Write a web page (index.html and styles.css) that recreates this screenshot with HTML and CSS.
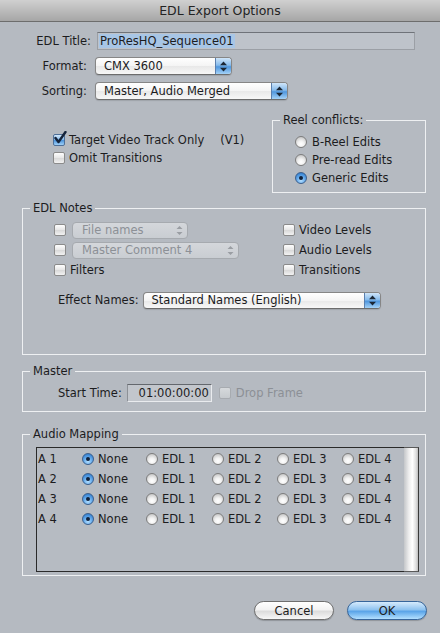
FILE: index.html
```html
<!DOCTYPE html>
<html>
<head>
<meta charset="utf-8">
<title>EDL Export Options</title>
<link rel="stylesheet" href="styles.css">
</head>
<body>
<div class="window">
  <div class="titlebar">EDL Export Options</div>

  <div class="top-form">
    <div class="row">
      <span class="lbl">EDL Title:</span>
      <div class="textfield"><span class="sel">ProResHQ_Sequence01</span></div>
    </div>
    <div class="row">
      <span class="lbl pop">Format:</span>
      <div class="popup w-format">
        <span class="ptext">CMX 3600</span>
        <span class="stepper"><svg width="7" height="11" viewBox="0 0 7 11"><path d="M0 4.2 L3.5 0.5 L7 4.2Z M0 6.8 L3.5 10.5 L7 6.8Z" fill="#1b2735"/></svg></span>
      </div>
    </div>
    <div class="row">
      <span class="lbl pop">Sorting:</span>
      <div class="popup w-sorting">
        <span class="ptext">Master, Audio Merged</span>
        <span class="stepper"><svg width="7" height="11" viewBox="0 0 7 11"><path d="M0 4.2 L3.5 0.5 L7 4.2Z M0 6.8 L3.5 10.5 L7 6.8Z" fill="#1b2735"/></svg></span>
      </div>
    </div>
  </div>

  <div class="mid">
    <div class="track-opts">
      <div class="opt"><span class="cb checked"><svg width="14" height="14" viewBox="0 0 14 14"><path d="M2.5 7 L5.5 11 L12.5 1" fill="none" stroke="#15233a" stroke-width="2.4" stroke-linecap="round" stroke-linejoin="round"/></svg></span><span>Target Video Track Only</span><span class="v1">(V1)</span></div>
      <div class="opt"><span class="cb"></span><span>Omit Transitions</span></div>
    </div>
    <fieldset class="group reel">
      <legend>Reel conflicts:</legend>
      <div class="reel-list">
        <div class="ropt"><span class="rb"></span><span>B-Reel Edits</span></div>
        <div class="ropt"><span class="rb"></span><span>Pre-read Edits</span></div>
        <div class="ropt"><span class="rb on"></span><span>Generic Edits</span></div>
      </div>
    </fieldset>
  </div>

  <fieldset class="group notes">
    <legend>EDL Notes</legend>
    <div class="notes-body">
      <div class="notes-grid">
        <div class="nopt"><span class="cb"></span>
          <div class="popup dis w-file"><span class="ptext">File names</span><span class="stepper"><svg width="7" height="11" viewBox="0 0 7 11"><path d="M0.5 4 L3.5 1 L6.5 4Z M0.5 7 L3.5 10 L6.5 7Z" fill="#9a9ea3"/></svg></span></div>
        </div>
        <div class="nopt"><span class="cb"></span><span>Video Levels</span></div>
        <div class="nopt"><span class="cb"></span>
          <div class="popup dis w-comment"><span class="ptext">Master Comment 4</span><span class="stepper"><svg width="7" height="11" viewBox="0 0 7 11"><path d="M0.5 4 L3.5 1 L6.5 4Z M0.5 7 L3.5 10 L6.5 7Z" fill="#9a9ea3"/></svg></span></div>
        </div>
        <div class="nopt"><span class="cb"></span><span>Audio Levels</span></div>
        <div class="nopt"><span class="cb"></span><span>Filters</span></div>
        <div class="nopt"><span class="cb"></span><span>Transitions</span></div>
      </div>
      <div class="effect-row">
        <span>Effect Names:</span>
        <div class="popup w-effect">
          <span class="ptext">Standard Names (English)</span>
          <span class="stepper"><svg width="7" height="11" viewBox="0 0 7 11"><path d="M0 4.2 L3.5 0.5 L7 4.2Z M0 6.8 L3.5 10.5 L7 6.8Z" fill="#1b2735"/></svg></span>
        </div>
      </div>
    </div>
  </fieldset>

  <fieldset class="group master">
    <legend>Master</legend>
    <div class="master-body">
      <span>Start Time:</span>
      <div class="tcfield">01:00:00:00</div>
      <span class="cb dim"></span>
      <span class="dimtext">Drop Frame</span>
    </div>
  </fieldset>

  <fieldset class="group audio">
    <legend>Audio Mapping</legend>
    <div class="audio-box">
      <div class="audio-table">
        <div class="arow">
          <span class="trk">A 1</span>
          <span class="aopt"><span class="rb on"></span>None</span>
          <span class="aopt"><span class="rb"></span>EDL 1</span>
          <span class="aopt"><span class="rb"></span>EDL 2</span>
          <span class="aopt"><span class="rb"></span>EDL 3</span>
          <span class="aopt"><span class="rb"></span>EDL 4</span>
        </div>
        <div class="arow">
          <span class="trk">A 2</span>
          <span class="aopt"><span class="rb on"></span>None</span>
          <span class="aopt"><span class="rb"></span>EDL 1</span>
          <span class="aopt"><span class="rb"></span>EDL 2</span>
          <span class="aopt"><span class="rb"></span>EDL 3</span>
          <span class="aopt"><span class="rb"></span>EDL 4</span>
        </div>
        <div class="arow">
          <span class="trk">A 3</span>
          <span class="aopt"><span class="rb on"></span>None</span>
          <span class="aopt"><span class="rb"></span>EDL 1</span>
          <span class="aopt"><span class="rb"></span>EDL 2</span>
          <span class="aopt"><span class="rb"></span>EDL 3</span>
          <span class="aopt"><span class="rb"></span>EDL 4</span>
        </div>
        <div class="arow">
          <span class="trk">A 4</span>
          <span class="aopt"><span class="rb on"></span>None</span>
          <span class="aopt"><span class="rb"></span>EDL 1</span>
          <span class="aopt"><span class="rb"></span>EDL 2</span>
          <span class="aopt"><span class="rb"></span>EDL 3</span>
          <span class="aopt"><span class="rb"></span>EDL 4</span>
        </div>
      </div>
      <div class="scroll-gutter"></div>
    </div>
  </fieldset>

  <div class="buttons">
    <button class="btn">Cancel</button>
    <button class="btn default">OK</button>
  </div>
</div>
</body>
</html>
```

FILE: styles.css
```css
* { box-sizing: border-box; }
html, body { margin: 0; padding: 0; }
body {
  font-family: "DejaVu Sans", "Noto Sans", sans-serif;
  font-size: 11.5px;
  color: #1c1c1e;
  background: #b5bac1;
}
.window {
  width: 440px;
  height: 633px;
  overflow: hidden;
  background: #b5bac1;
}

/* title bar */
.titlebar {
  height: 22px;
  line-height: 21px;
  text-align: center;
  font-size: 12.5px;
  color: #232323;
  background: linear-gradient(#d0d0d0, #a6a6a6);
  border-bottom: 1px solid #6d6d6d;
}

/* top form */
.top-form {
  padding-top: 10px;
  display: flex;
  flex-direction: column;
  gap: 7px;
}
.row {
  display: flex;
  align-items: center;
  height: 18px;
}
.lbl {
  width: 91px;
  flex: none;
  text-align: right;
}
.lbl.pop { padding-right: 4px; }
.textfield {
  margin-left: 6px;
  width: 318px;
  height: 18px;
  border: 1px solid #9b9fa5;
  border-top-color: #6f7379;
  background: #bec3ca;
  line-height: 16px;
  padding-left: 1px;
  white-space: nowrap;
}
.sel { background: #a8c6e6; padding: 0 1px; }

/* popup buttons */
.popup {
  margin-left: 4px;
  height: 18px;
  border: 1px solid #868686;
  border-bottom-color: #6c6c6c;
  border-radius: 4px;
  background: linear-gradient(#ffffff, #f4f4f4 50%, #e8e8e8 51%, #f7f7f7);
  display: flex;
  align-items: center;
  box-shadow: 0 1px 1px rgba(0, 0, 0, 0.12);
  overflow: hidden;
  flex: none;
}
.ptext {
  flex: 1;
  padding-left: 8px;
  line-height: 16px;
  white-space: nowrap;
}
.stepper {
  width: 16px;
  height: 100%;
  display: flex;
  align-items: center;
  justify-content: center;
  border-left: 1px solid #5a7fae;
  background: linear-gradient(#cfe5f9, #86bbec 45%, #4f96dd 55%, #a4d2f7);
}
.w-format { width: 137px; }
.w-sorting { width: 193px; }
.w-effect { width: 238px; margin-left: 4px; }
.w-file { width: 116px; }
.w-comment { width: 167px; }
.popup.dis {
  height: 17px;
  border-color: #a6aaaf;
  background: linear-gradient(#d4d7db, #c9cdd2);
  box-shadow: none;
  margin-left: 6px;
}
.popup.dis .ptext { color: #8c9096; padding-left: 9px; }
.popup.dis .stepper {
  border-left: none;
  background: none;
}

/* checkboxes & radios */
.cb {
  width: 12px;
  height: 12px;
  flex: none;
  border: 1px solid #8b8b8b;
  border-radius: 2px;
  background: linear-gradient(#fdfdfd, #e6e6e6 50%, #d8d8d8 51%, #f2f2f2);
  position: relative;
}
.cb.checked {
  background: linear-gradient(#d5e9fb, #88bdee 45%, #4e95dc 55%, #9fd0f7);
  border-color: #4e6f98;
}
.cb.checked svg {
  position: absolute;
  left: -1px;
  top: -4px;
}
.cb.dim {
  border-color: #a7abb0;
  background: linear-gradient(#d6d9dc, #c6cace);
}
.rb {
  width: 12px;
  height: 12px;
  flex: none;
  border: 1px solid #7d7d7d;
  border-radius: 50%;
  background: radial-gradient(circle at 50% 70%, #ffffff 0, #f2f2f2 35%, #c9c9c9 80%);
  position: relative;
}
.rb.on {
  border-color: #3c5f8c;
  background: radial-gradient(circle at 50% 75%, #b6e0ff 0, #6db0ee 40%, #2f7dcf 85%);
}
.rb.on::after {
  content: "";
  position: absolute;
  left: 3px;
  top: 3px;
  width: 4px;
  height: 4px;
  border-radius: 50%;
  background: #10213a;
}

/* middle section */
.mid {
  margin-top: 13px;
  display: flex;
  align-items: flex-start;
}
.track-opts {
  padding-left: 53px;
  padding-top: 18px;
}
.opt {
  height: 18px;
  display: flex;
  align-items: center;
  gap: 4px;
  white-space: nowrap;
}
.v1 { margin-left: 12px; }

/* group boxes */
.group {
  margin: 0 14px 0 22px;
  padding: 0;
  min-width: 0;
  border: 1px solid #eef0f2;
}
.group legend {
  margin-left: 7px;
  padding: 0 3px;
  line-height: 15px;
  height: 15px;
}
.reel {
  width: 154px;
  margin: 0 14px 0 auto;
}
.reel-list {
  padding: 5px 0 5px 22px;
}
.ropt {
  height: 18px;
  display: flex;
  align-items: center;
  gap: 5px;
  white-space: nowrap;
}

/* EDL notes */
.notes { margin-top: 8px; }
.notes-body {
  height: 138px;
  padding: 4px 0 0 31px;
}
.notes-grid {
  display: grid;
  grid-template-columns: 229px auto;
  grid-auto-rows: 20px;
}
.nopt {
  display: flex;
  align-items: center;
  gap: 4px;
  white-space: nowrap;
}
.nopt .popup.dis { margin-left: 2px; }
.effect-row {
  margin-top: 10px;
  margin-left: 4px;
  height: 20px;
  display: flex;
  align-items: center;
}
.effect-row .popup { height: 17px; }

/* master */
.master { margin-top: 9px; }
.master-body {
  padding: 5px 0 9px 35px;
  display: flex;
  align-items: center;
  height: 32px;
}
.tcfield {
  margin-left: 5px;
  width: 85px;
  height: 18px;
  line-height: 16px;
  text-align: right;
  padding-right: 2px;
  border: 1px solid #8d9197;
  border-top-color: #64686e;
  border-right-color: #e9ebee;
  border-bottom-color: #e9ebee;
  background: #c2c6cc;
  margin-right: 7px;
}
.dimtext { color: #8c9096; margin-left: 5px; }

/* audio mapping */
.audio { margin-top: 15px; }
.audio-box {
  margin: 5px 6px 3px 13px;
  height: 125px;
  display: flex;
}
.audio-table {
  flex: 1;
  border: 1px solid #2a2a2a;
  border-right: none;
  padding-top: 1px;
  background: #b6bbc2;
}
.arow {
  height: 20px;
  display: grid;
  grid-template-columns: 45px 64px 66px 65px 65px auto;
  align-items: center;
  white-space: nowrap;
}
.trk { padding-left: 1px; }
.aopt {
  display: flex;
  align-items: center;
  gap: 4px;
}
.scroll-gutter {
  width: 15px;
  border-top: 1px solid #5a5a5a;
  border-bottom: 1px solid #5a5a5a;
  border-right: 1px solid #3a3a3a;
  background: linear-gradient(to right, #c4c6c9, #eeeeee 35%, #ffffff 60%, #e0e0e0 85%, #bdbdbd);
}

/* buttons */
.buttons {
  margin-top: 25px;
  display: flex;
  justify-content: flex-end;
  gap: 13px;
  padding-right: 13px;
}
.btn {
  width: 80px;
  height: 19px;
  border-radius: 10px;
  border: 1px solid #6f6f6f;
  font-family: "DejaVu Sans", "Noto Sans", sans-serif;
  font-size: 11.5px;
  color: #1c1c1c;
  padding: 0;
  line-height: 16px;
  background: linear-gradient(#ffffff, #f3f3f3 45%, #dcdcdc 55%, #f7f7f7);
  box-shadow: 0 1px 1px rgba(0, 0, 0, 0.2);
}
.btn.default {
  border-color: #37659a;
  background: linear-gradient(#d6ebfc, #8fc3f0 45%, #5aa4e8 55%, #b3e0ff);
}
```
